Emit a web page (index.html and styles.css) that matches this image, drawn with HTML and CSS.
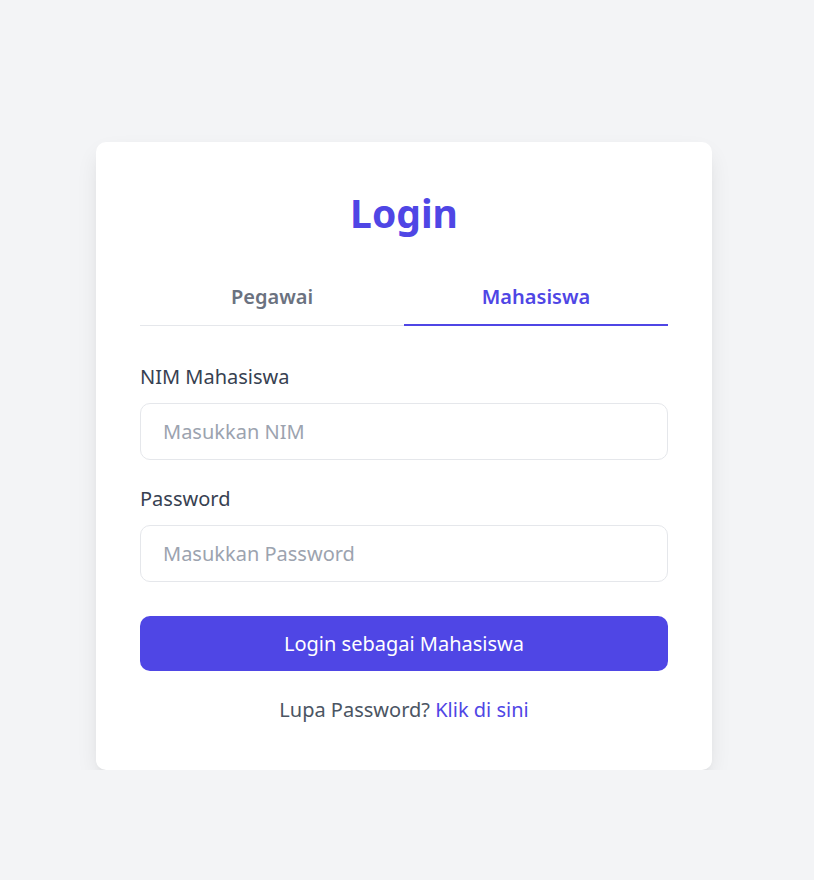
FILE: index.html
```html
<!DOCTYPE html>
<html lang="id">
<head>
<meta charset="utf-8">
<title>Login</title>
<link rel="stylesheet" href="styles.css">
</head>
<body>
<main class="page">
  <section class="card">
    <h1 class="title">Login</h1>
    <div class="tabs">
      <button class="tab">Pegawai</button>
      <button class="tab active">Mahasiswa</button>
    </div>
    <form class="form">
      <label class="label" for="nim">NIM Mahasiswa</label>
      <input class="input" id="nim" type="text" placeholder="Masukkan NIM">
      <label class="label label-gap" for="pw">Password</label>
      <input class="input" id="pw" type="password" placeholder="Masukkan Password">
      <button class="submit" type="button">Login sebagai Mahasiswa</button>
    </form>
    <p class="footer">Lupa Password? <a class="link" href="#">Klik di sini</a></p>
  </section>
</main>
</body>
</html>
```

FILE: styles.css
```css
* { box-sizing: border-box; }
html, body { margin: 0; padding: 0; }
body {
  background: #f3f4f6;
  font-family: "Noto Sans", "Open Sans", sans-serif;
  color: #374151;
}
.page {
  display: flex;
  justify-content: center;
  padding: 142px 6px 0 0;
}
.card {
  width: 616px;
  background: #fff;
  border-radius: 10px;
  box-shadow: 0 10px 25px -5px rgba(0,0,0,0.12), 0 8px 10px -6px rgba(0,0,0,0.08);
  padding: 48px 44px 46px;
}
.title {
  margin: 0;
  text-align: center;
  font-size: 39px;
  line-height: 46px;
  font-weight: 700;
  color: #4f46e5;
}
.tabs {
  display: flex;
  margin-top: 38px;
  border-bottom: 1px solid #e5e7eb;
}
.tab {
  flex: 1;
  border: 0;
  background: none;
  font-family: inherit;
  font-size: 20px;
  line-height: 28px;
  font-weight: 600;
  color: #6b7280;
  padding: 9px 0 13px;
  margin-bottom: -1px;
  border-bottom: 2px solid transparent;
}
.tab.active {
  color: #4f46e5;
  border-bottom-color: #4f46e5;
}
.form {
  display: flex;
  flex-direction: column;
  margin-top: 37px;
}
.label {
  font-size: 20px;
  line-height: 28px;
  color: #374151;
  margin-bottom: 12px;
}
.label-gap { margin-top: 25px; }
.input {
  height: 57px;
  border: 1px solid #e5e7eb;
  border-radius: 10px;
  padding: 0 22px;
  font-family: inherit;
  font-size: 20px;
  color: #374151;
  outline: none;
}
.input::placeholder { color: #9ca3af; }
.submit {
  margin-top: 34px;
  height: 55px;
  border: 0;
  border-radius: 10px;
  background: #4f46e5;
  color: #fff;
  font-family: inherit;
  font-size: 20px;
}
.footer {
  margin: 25px 0 0;
  text-align: center;
  font-size: 20px;
  line-height: 28px;
  color: #4b5563;
}
.link { color: #4f46e5; text-decoration: none; }
```
